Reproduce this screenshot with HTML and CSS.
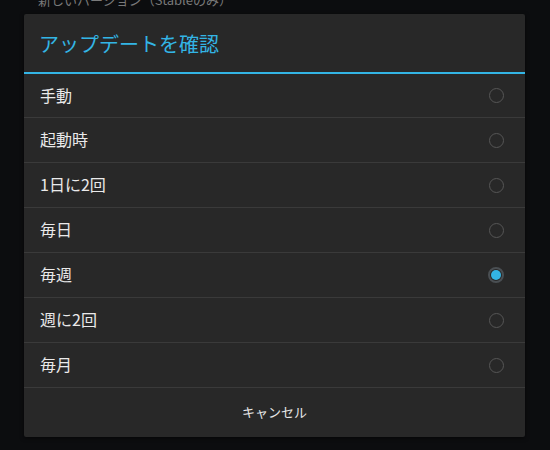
FILE: index.html
```html
<!DOCTYPE html>
<html lang="ja">
<head>
<meta charset="utf-8">
<link rel="stylesheet" href="styles.css">
</head>
<body>
<div class="backdrop-text">新しいバージョン（Stableのみ）</div>
<div class="dialog">
  <div class="dialog-header">アップデートを確認</div>
  <ul class="options">
    <li class="option"><span>手動</span><span class="radio"></span></li>
    <li class="option"><span>起動時</span><span class="radio"></span></li>
    <li class="option"><span>1日に2回</span><span class="radio"></span></li>
    <li class="option"><span>毎日</span><span class="radio"></span></li>
    <li class="option"><span>毎週</span><span class="radio checked"></span></li>
    <li class="option"><span>週に2回</span><span class="radio"></span></li>
    <li class="option"><span>毎月</span><span class="radio"></span></li>
  </ul>
  <div class="dialog-footer">キャンセル</div>
</div>
</body>
</html>
```
FILE: styles.css
```css
html, body {
  margin: 0;
  padding: 0;
  background: #0c0d0f;
  font-family: "Noto Sans CJK JP", "Noto Sans", sans-serif;
}
body {
  width: 550px;
  height: 450px;
  overflow: hidden;
}
.backdrop-text {
  margin: -9px 0 0 38px;
  height: 23px;
  font-size: 13px;
  line-height: 18px;
  color: #7a7a7a;
}
.dialog {
  width: 501px;
  margin-left: 24px;
  background: #282828;
  border-radius: 2px;
  box-shadow: 0 1px 4px rgba(0,0,0,0.6);
}
.dialog-header {
  height: 58px;
  display: flex;
  align-items: center;
  padding-left: 15px;
  font-size: 20px;
  color: #33b5e5;
  border-bottom: 2px solid #33b5e5;
  box-sizing: content-box;
}
.options {
  list-style: none;
  margin: 0;
  padding: 0;
}
.option {
  height: 44px;
  display: flex;
  align-items: center;
  justify-content: space-between;
  padding: 0 21px 0 16px;
  font-size: 16px;
  color: #eaeaea;
  border-bottom: 1px solid #3a3a3a;
}
.option span:first-child {
  position: relative;
  top: -1px;
}
.option:first-child {
  height: 43px;
}
.radio {
  width: 13px;
  height: 13px;
  border-radius: 50%;
  border: 1.5px solid #565656;
  display: flex;
  align-items: center;
  justify-content: center;
}
.radio.checked {
  border: 2px solid #4a4f53;
  width: 12px;
  height: 12px;
}
.radio.checked::after {
  content: "";
  width: 10px;
  height: 10px;
  border-radius: 50%;
  background: #33b5e5;
}
.dialog-footer {
  height: 46px;
  padding-bottom: 3px;
  display: flex;
  align-items: center;
  justify-content: center;
  font-size: 13px;
  color: #e6e6e6;
}
```
